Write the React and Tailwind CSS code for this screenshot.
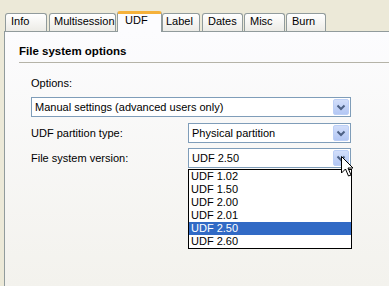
import React from 'react';

const tabs = [
    { label: 'Info', w: 'w-[42px]', ml: 'ml-0', pl: 'pl-[5px]' },
    { label: 'Multisession', w: 'w-[67px]', ml: 'ml-[2px]', pl: 'pl-[4px]' },
    { label: 'UDF', w: 'w-[45px]', ml: 'ml-[1px]', pl: 'pl-[7px]', active: true },
    { label: 'Label', w: 'w-[38px]', ml: 'ml-0', pl: 'pl-[3px]' },
    { label: 'Dates', w: 'w-[41px]', ml: 'ml-[2px]', pl: 'pl-[5px]' },
    { label: 'Misc', w: 'w-[41px]', ml: 'ml-[1px]', pl: 'pl-[5px]' },
    { label: 'Burn', w: 'w-[40px]', ml: 'ml-[1px]', pl: 'pl-[5px]' },
];

const versions = ['UDF 1.02', 'UDF 1.50', 'UDF 2.00', 'UDF 2.01', 'UDF 2.50', 'UDF 2.60'];

function DropButton() {
    return (
        <div className="w-[16px] h-[16px] mr-[1px] rounded-[2px] border border-[#BCCFF6] bg-gradient-to-b from-[#D2DEFA] to-[#B3C7F4] flex items-center justify-center shrink-0">
            <svg width="14" height="14" viewBox="0 0 14 14">
                <path d="M3.5 5.5 L7 9 L10.5 5.5" fill="none" stroke="#4D6185" strokeWidth="2" />
            </svg>
        </div>
    );
}

function Combo({ value, width }) {
    return (
        <div className={`${width} h-[20px] border border-[#7F9DB9] bg-white flex items-center`}>
            <span className="flex-1 pl-[3px] leading-[13px] whitespace-nowrap">{value}</span>
            <DropButton />
        </div>
    );
}

export default function App() {
    return (
        <div className="w-[389px] h-[286px] overflow-hidden bg-[#ECE9D8] flex flex-col font-['Liberation_Sans',Arial,sans-serif] text-[11px] text-black relative">

            {/* Tab strip */}
            <div className="h-[31px] flex items-end pl-[5px] relative z-10 shrink-0">
                {tabs.map(tab => (
                    tab.active ? (
                        <div
                            key={tab.label}
                            className={`${tab.w} ${tab.ml} ${tab.pl} h-[21px] -mb-px border-x border-t-[3px] border-x-[#919B9C] border-t-[#F5B13A] rounded-t-[3px] bg-[#FCFCFE] leading-[13px] whitespace-nowrap`}
                        >
                            {tab.label}
                        </div>
                    ) : (
                        <div
                            key={tab.label}
                            className={`${tab.w} ${tab.ml} ${tab.pl} h-[18px] border-x border-t border-[#919B9C] rounded-t-[3px] bg-gradient-to-b from-[#FFFFFF] to-[#ECEBE6] pt-[1px] leading-[13px] whitespace-nowrap`}
                        >
                            {tab.label}
                        </div>
                    )
                ))}
            </div>

            {/* Panel */}
            <div className="flex-1 ml-[4px] border-l border-t border-[#919B9C] bg-gradient-to-b from-[#FCFCFE] to-[#F3F2ED] pl-[14px] pt-[12px]">
                <div className="font-bold text-[11.5px] leading-[14px]">File system options</div>
                <div className="mt-[4px] h-px bg-[#B5B3A8]" />

                <div className="pl-[12px]">
                    <div className="mt-[14px] leading-[13px]">Options:</div>
                    <div className="mt-[7px]">
                        <Combo value="Manual settings (advanced users only)" width="w-[320px]" />
                    </div>

                    <div className="mt-[6px] flex items-center">
                        <div className="w-[157px] leading-[13px]">UDF partition type:</div>
                        <Combo value="Physical partition" width="w-[163px]" />
                    </div>

                    <div className="mt-[5px] flex items-center">
                        <div className="w-[157px] leading-[13px]">File system version:</div>
                        <div className="relative">
                            <Combo value="UDF 2.50" width="w-[163px]" />
                            {/* Open list */}
                            <div className="absolute left-0 top-[21px] w-[164px] border border-black bg-white z-20">
                                {versions.map(v => (
                                    <div
                                        key={v}
                                        className={`h-[13px] leading-[13px] pl-[2px] ${v === 'UDF 2.50' ? 'bg-[#316AC5] text-white' : ''}`}
                                    >
                                        {v}
                                    </div>
                                ))}
                            </div>
                        </div>
                    </div>
                </div>
            </div>

            {/* Mouse cursor */}
            <svg className="absolute left-[341px] top-[156px] z-30" width="14" height="22" viewBox="0 0 14 22">
                <path d="M0.5 0.5 L0.5 17 L4.5 13 L7.5 20 L10 19 L7 12 L12 12 Z" fill="white" stroke="black" strokeWidth="1" strokeLinejoin="miter" />
            </svg>
        </div>
    );
}
